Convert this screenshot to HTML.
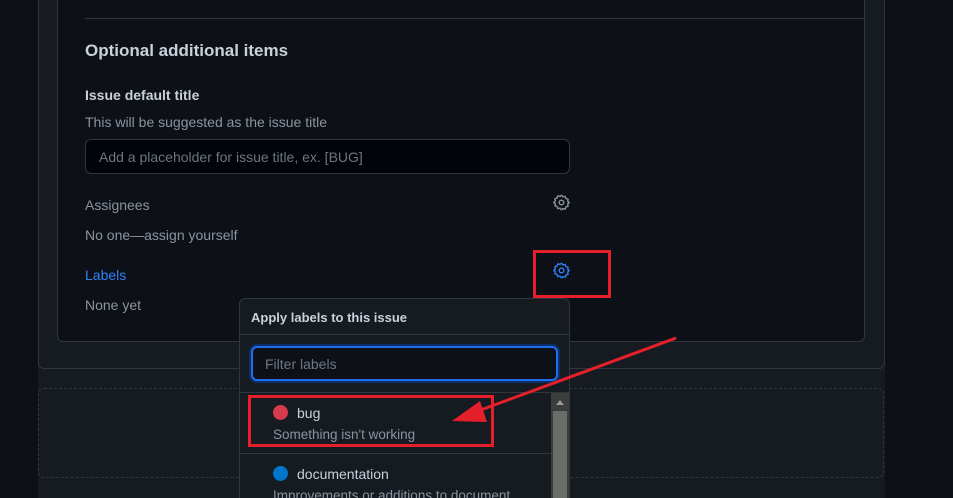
<!DOCTYPE html>
<html style="width:953px;height:498px;overflow:hidden"><head><meta charset="utf-8"><style>
*{box-sizing:border-box;margin:0;padding:0}
body{width:953px;height:498px;overflow:hidden;background:#0d1117;font-family:"Liberation Sans",sans-serif;position:relative}
.a{position:absolute}
.col{left:38px;top:0;width:847px;height:498px;background:#161b22}
.outer{left:38px;top:-10px;width:847px;height:379px;border:1px solid #30363d;border-radius:6px;background:#161b22}
.inner{left:57px;top:-10px;width:808px;height:352px;border:1px solid #30363d;border-radius:6px;background:#0d1117}
.t{color:#c9d1d9;font-size:14px;white-space:nowrap}
.m{color:#8b949e;font-size:14px;white-space:nowrap}
.dash{left:38px;top:388px;width:846px;height:90px;border:1px dashed #30363d;border-radius:6px}
.pop{left:239px;top:298px;width:331px;height:200px;background:#161b22;border:1px solid #30363d;border-bottom:none;border-radius:6px 6px 0 0;overflow:hidden}
.red{border:3px solid #e5202a}
</style></head><body>
<div class="a col"></div>
<div class="a outer"></div>
<div class="a inner"></div>
<div class="a" style="left:85px;top:18px;width:779px;height:1px;background:#30363d"></div>
<div class="a t" style="left:85px;top:41px;font-size:17px;font-weight:bold">Optional additional items</div>
<div class="a t" style="left:85px;top:87px;font-weight:bold">Issue default title</div>
<div class="a m" style="left:85px;top:114px">This will be suggested as the issue title</div>
<div class="a" style="left:85px;top:139px;width:485px;height:35px;border:1px solid #30363d;border-radius:6px;background:#010409"></div>
<div class="a" style="left:99px;top:149px;color:#6e7681;font-size:14px">Add a placeholder for issue title, ex. [BUG]</div>
<div class="a m" style="left:85px;top:197px">Assignees</div>
<div class="a m" style="left:85px;top:227px">No one—assign yourself</div>
<div class="a" style="left:85px;top:267px;color:#2f81f7;font-size:14px">Labels</div>
<div class="a m" style="left:85px;top:297px">None yet</div>
<svg class="a" style="left:553px;top:194px" width="17" height="17" viewBox="0 0 16 16" fill="none" stroke="#8b949e" stroke-width="1.3"><path d="M8 1.2l1.5 1.5 2-.4.7 2 2 .7-.4 2L15.3 8l-1.5 1.5.4 2-2 .7-.7 2-2-.4L8 14.8l-1.5-1.5-2 .4-.7-2-2-.7.4-2L.7 8l1.5-1.5-.4-2 2-.7.7-2 2 .4z"/><circle cx="8" cy="8" r="2.2"/></svg>
<svg class="a" style="left:553px;top:262px" width="17" height="17" viewBox="0 0 16 16" fill="none" stroke="#2f81f7" stroke-width="1.3"><path d="M8 1.2l1.5 1.5 2-.4.7 2 2 .7-.4 2L15.3 8l-1.5 1.5.4 2-2 .7-.7 2-2-.4L8 14.8l-1.5-1.5-2 .4-.7-2-2-.7.4-2L.7 8l1.5-1.5-.4-2 2-.7.7-2 2 .4z"/><circle cx="8" cy="8" r="2.2"/></svg>
<div class="a red" style="left:533px;top:250px;width:78px;height:48px"></div>
<div class="a dash"></div>
<div class="a pop">
 <div class="a" style="left:11px;top:11px;color:#c9d1d9;font-size:13px;font-weight:bold">Apply labels to this issue</div>
 <div class="a" style="left:0;top:35px;width:331px;height:1px;background:#30363d"></div>
 <div class="a" style="left:11px;top:47px;width:307px;height:35px;border:2px solid #1f6feb;border-radius:6px;background:#0d1117;box-shadow:0 0 0 2px #0c2d6b"></div>
 <div class="a" style="left:25px;top:57px;color:#6e7681;font-size:14px">Filter labels</div>
 <div class="a" style="left:0;top:93px;width:331px;height:1px;background:#30363d"></div>
 <div class="a" style="left:33px;top:106px;width:15px;height:15px;border-radius:50%;background:#d73a4a"></div>
 <div class="a t" style="left:57px;top:106px">bug</div>
 <div class="a m" style="left:33px;top:128px;font-size:13.5px">Something isn't working</div>
 <div class="a" style="left:0;top:154px;width:312px;height:1px;background:#30363d"></div>
 <div class="a" style="left:33px;top:167px;width:15px;height:15px;border-radius:50%;background:#0075ca"></div>
 <div class="a t" style="left:57px;top:167px">documentation</div>
 <div class="a" style="left:33px;top:189px;width:278px;height:11px;overflow:hidden"><div class="m" style="font-size:13.5px;line-height:16px">Improvements or additions to document</div></div>
 <div class="a" style="left:311px;top:94px;width:19px;height:106px;background:#3c3e3b"></div>
 <div class="a" style="left:313px;top:112px;width:14px;height:88px;background:#6b6d69"></div>
 <div class="a" style="left:316px;top:101px;width:0;height:0;border-left:4px solid transparent;border-right:4px solid transparent;border-bottom:5px solid #9a9a98"></div>
</div>
<div class="a red" style="left:248px;top:395px;width:246px;height:52px"></div>
<svg class="a" style="left:0;top:0" width="953" height="498"><line x1="676" y1="338" x2="478" y2="411" stroke="#e5202a" stroke-width="3"/><polygon points="452,421 480,401 487,422" fill="#e5202a"/></svg>
</body></html>
